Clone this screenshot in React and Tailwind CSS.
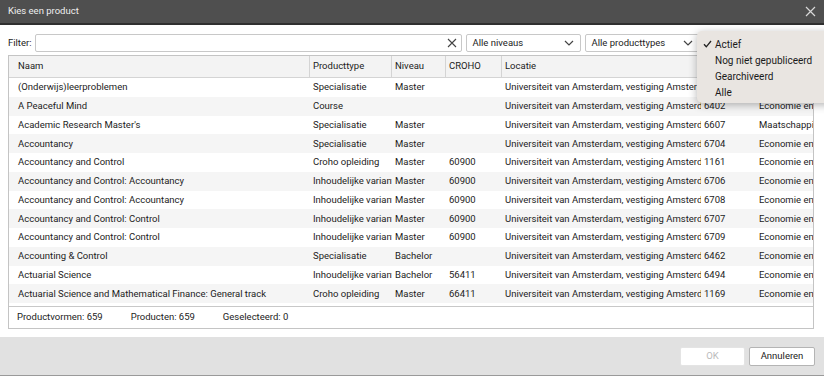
import React from "react";

const rows = [
  ["(Onderwijs)leerproblemen", "Specialisatie", "Master", "", "Universiteit van Amsterdam, vestiging Amsterdam", "6402", "Economie en"],
  ["A Peaceful Mind", "Course", "", "", "Universiteit van Amsterdam, vestiging Amsterdam", "6402", "Economie en"],
  ["Academic Research Master's", "Specialisatie", "Master", "", "Universiteit van Amsterdam, vestiging Amsterdam", "6607", "Maatschappij"],
  ["Accountancy", "Specialisatie", "Master", "", "Universiteit van Amsterdam, vestiging Amsterdam", "6704", "Economie en"],
  ["Accountancy and Control", "Croho opleiding", "Master", "60900", "Universiteit van Amsterdam, vestiging Amsterdam", "1161", "Economie en"],
  ["Accountancy and Control: Accountancy", "Inhoudelijke variant", "Master", "60900", "Universiteit van Amsterdam, vestiging Amsterdam", "6706", "Economie en"],
  ["Accountancy and Control: Accountancy", "Inhoudelijke variant", "Master", "60900", "Universiteit van Amsterdam, vestiging Amsterdam", "6708", "Economie en"],
  ["Accountancy and Control: Control", "Inhoudelijke variant", "Master", "60900", "Universiteit van Amsterdam, vestiging Amsterdam", "6707", "Economie en"],
  ["Accountancy and Control: Control", "Inhoudelijke variant", "Master", "60900", "Universiteit van Amsterdam, vestiging Amsterdam", "6709", "Economie en"],
  ["Accounting & Control", "Specialisatie", "Bachelor", "", "Universiteit van Amsterdam, vestiging Amsterdam", "6462", "Economie en"],
  ["Actuarial Science", "Inhoudelijke variant", "Bachelor", "56411", "Universiteit van Amsterdam, vestiging Amsterdam", "6494", "Economie en"],
  ["Actuarial Science and Mathematical Finance: General track", "Croho opleiding", "Master", "66411", "Universiteit van Amsterdam, vestiging Amsterdam", "1169", "Economie en"],
];

const cols = "grid grid-cols-[301px_82px_54px_56px_199px_55px_60px]";

function Chevron() {
  return (
    <svg width="10" height="6" viewBox="0 0 10 6" className="shrink-0">
      <path d="M1 1l4 4 4-4" fill="none" stroke="#444" strokeWidth="1.2" />
    </svg>
  );
}

function Select({ label, w }) {
  return (
    <div className={`${w} h-[18px] border border-[#c8c8c8] rounded-[2px] bg-white flex items-center justify-between pl-[6px] pr-[6px]`}>
      <span>{label}</span>
      <Chevron />
    </div>
  );
}

export default function App() {
  return (
    <div
      className="relative w-[824px] h-[376px] overflow-hidden bg-white text-[9.5px] text-[#1c1c1c]"
      style={{ fontFamily: "Roboto, 'Liberation Sans', sans-serif" }}
    >
      <div className="h-[25px] bg-[#4f4f4f] border-b-2 border-[#2f2f2f] flex items-center justify-between pl-[8px] pr-[8px]">
        <span className="text-[#eee] text-[9.5px]">Kies een product</span>
        <svg width="11" height="11" viewBox="0 0 11 11">
          <path d="M1 1l9 9M10 1l-9 9" stroke="#d8d8d8" strokeWidth="1.2" />
        </svg>
      </div>

      <div className="h-[312px] bg-white pl-[8px] pr-[8px] pt-[9px] flex flex-col">
        <div className="flex items-center h-[18px] gap-[4px]">
          <span className="mr-[-1px]">Filter:</span>
          <div className="w-[427px] h-[18px] border border-[#c8c8c8] rounded-[2px] bg-white flex items-center justify-end pr-[4px]">
            <svg width="10" height="10" viewBox="0 0 10 10">
              <path d="M1 1l8 8M9 1l-8 8" stroke="#444" strokeWidth="1.1" />
            </svg>
          </div>
          <Select label="Alle niveaus" w="w-[115px]" />
          <Select label="Alle producttypes" w="w-[115px]" />
          <Select label="Actief" w="w-[112px]" />
        </div>

        <div className="mt-[3px] w-[806px] h-[274px] border border-[#c4c4c4] flex flex-col overflow-hidden">
          <div className={`${cols} h-[22px] bg-[#f3f3f3] border-b border-[#d4d4d4] items-center shrink-0`}>
            <div className="pl-[9px] h-full flex items-center border-r border-[#d4d4d4]">Naam</div>
            <div className="pl-[3px] h-full flex items-center border-r border-[#d4d4d4]">Producttype</div>
            <div className="pl-[3px] h-full flex items-center border-r border-[#d4d4d4]">Niveau</div>
            <div className="pl-[3px] h-full flex items-center border-r border-[#d4d4d4]">CROHO</div>
            <div className="pl-[3px] h-full flex items-center border-r border-[#d4d4d4]">Locatie</div>
            <div className="pl-[3px] h-full flex items-center border-r border-[#d4d4d4]">Code</div>
            <div className="pl-[3px] h-full flex items-center">Faculteit</div>
          </div>
          {rows.map((r, i) => (
            <div
              key={i}
              className={`${cols} h-[18.75px] items-center shrink-0 ${i % 2 === 1 ? "bg-[#f5f5f5]" : "bg-white"}`}
            >
              <div className="pl-[9px] whitespace-nowrap overflow-hidden">{r[0]}</div>
              <div className="pl-[3px] whitespace-nowrap overflow-hidden">{r[1]}</div>
              <div className="pl-[3px] whitespace-nowrap overflow-hidden">{r[2]}</div>
              <div className="pl-[3px] whitespace-nowrap overflow-hidden">{r[3]}</div>
              <div className="pl-[3px] whitespace-nowrap overflow-hidden">{r[4]}</div>
              <div className="pl-[3px] whitespace-nowrap overflow-hidden">{r[5]}</div>
              <div className="pl-[3px] whitespace-nowrap overflow-hidden">{r[6]}</div>
            </div>
          ))}
          <div className="mt-[3px] border-t border-[#c8c8c8] flex-1 flex items-center pl-[8px] gap-[28px]">
            <span>Productvormen: 659</span>
            <span>Producten: 659</span>
            <span>Geselecteerd: 0</span>
          </div>
        </div>
      </div>

      <div className="h-[39px] bg-[#e1e1e1] border-b border-[#9a9a9a] flex items-center justify-end pr-[9px] gap-[4px]">
        <div className="w-[65px] h-[19px] bg-white border border-[#e4e4e4] rounded-[2px] flex items-center justify-center text-[#bbb]">OK</div>
        <div className="w-[66px] h-[19px] bg-white border border-[#b4b4b4] rounded-[2px] flex items-center justify-center">Annuleren</div>
      </div>

      <div className="absolute left-[697px] top-[31px] w-[140px] h-[72px] bg-[#e9e5e1] rounded-[5px] shadow-[0_2px_8px_rgba(0,0,0,0.3)] pt-[5px] text-[10px] text-[#1a1a1a]">
        <div className="h-[16px] flex items-center relative pl-[18px]">
          <svg className="absolute left-[6px] top-[4px]" width="9" height="8" viewBox="0 0 9 8">
            <path d="M1 4.2l2.3 2.6L8 1" fill="none" stroke="#222" strokeWidth="1.3" />
          </svg>
          Actief
        </div>
        <div className="h-[16px] flex items-center pl-[18px]">Nog niet gepubliceerd</div>
        <div className="h-[16px] flex items-center pl-[18px]">Gearchiveerd</div>
        <div className="h-[16px] flex items-center pl-[18px]">Alle</div>
      </div>
    </div>
  );
}
